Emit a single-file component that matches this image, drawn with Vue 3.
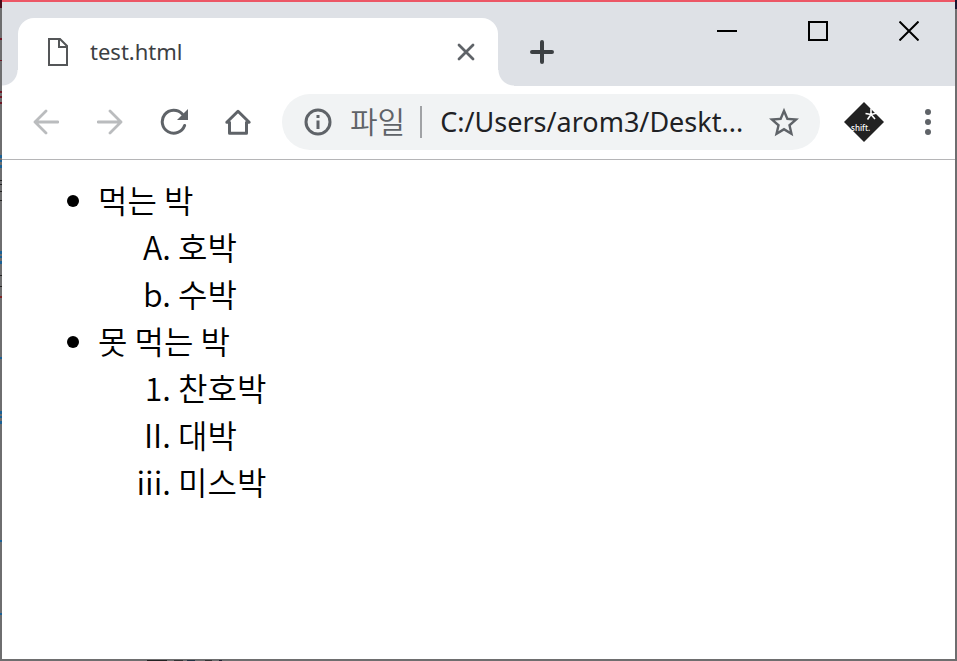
<script setup>
import { ref } from 'vue'

const address = ref('C:/Users/arom3/Deskt...')
const groups = [
  {
    name: '먹는 박',
    items: [
      { text: '호박', marker: 'upper-alpha' },
      { text: '수박', marker: 'lower-alpha' }
    ]
  },
  {
    name: '못 먹는 박',
    items: [
      { text: '찬호박', marker: 'decimal' },
      { text: '대박', marker: 'upper-roman' },
      { text: '미스박', marker: 'lower-roman' }
    ]
  }
]
</script>

<template>
  <div class="window">
    <header class="strip">
      <div class="tab">
        <svg class="file-icon" width="20" height="28" viewBox="0 0 20 28" fill="none" stroke="#545658" stroke-width="2" aria-hidden="true">
          <path d="M1 1H12L19 8V27H1Z" />
          <path d="M11 1V9H19" />
        </svg>
        <span class="title">test.html</span>
        <button class="tab-close" type="button" aria-label="Close tab">
          <svg width="18" height="18" viewBox="0 0 18 18" stroke="#5f6368" stroke-width="2.8" stroke-linecap="round">
            <path d="M2 2L16 16M16 2L2 16" />
          </svg>
        </button>
      </div>
      <button class="new-tab" type="button" aria-label="New tab">
        <svg width="24" height="24" viewBox="0 0 24 24" stroke="#3c4043" stroke-width="4" stroke-linecap="round">
          <path d="M12 2V22M2 12H22" />
        </svg>
      </button>
      <div class="controls">
        <button type="button" aria-label="Minimize">
          <svg width="20" height="20" viewBox="0 0 20 20"><path d="M0 9H20V11H0Z" /></svg>
        </button>
        <button type="button" aria-label="Maximize">
          <svg width="20" height="20" viewBox="0 0 20 20" fill="none" stroke="#000" stroke-width="2"><path d="M1 1H19V19H1Z" /></svg>
        </button>
        <button type="button" aria-label="Close window">
          <svg width="20" height="20" viewBox="0 0 20 20" stroke="#000" stroke-width="2"><path d="M0.5 0.5L19.5 19.5M19.5 0.5L0.5 19.5" /></svg>
        </button>
      </div>
    </header>

    <nav class="toolbar">
      <button class="nav-button" type="button" aria-label="Back">
        <svg width="26" height="26" viewBox="0 0 26 26" fill="none" stroke="#babcbe" stroke-width="2.8" stroke-linecap="round" stroke-linejoin="round">
          <path d="M13 2L2 13L13 24M2 13H25" />
        </svg>
      </button>
      <button class="nav-button" type="button" aria-label="Forward">
        <svg width="26" height="26" viewBox="0 0 26 26" fill="none" stroke="#babcbe" stroke-width="2.8" stroke-linecap="round" stroke-linejoin="round">
          <path d="M13 2L24 13L13 24M24 13H1" />
        </svg>
      </button>
      <button class="nav-button" type="button" aria-label="Reload">
        <svg width="28" height="28" viewBox="0 0 28 28" fill="none">
          <path d="M24.6 17.5A11.5 11.5 0 1 1 22.3 6" stroke="#5f6368" stroke-width="3" stroke-linecap="round" />
          <path d="M28 1V12H17Z" fill="#5f6368" />
        </svg>
      </button>
      <button class="nav-button" type="button" aria-label="Home">
        <svg width="28" height="28" viewBox="0 0 28 28" fill="none" stroke="#5f6368" stroke-width="3" stroke-linecap="round" stroke-linejoin="round">
          <path d="M5.500 14.300H2.800L14 3.300L25.200 14.300H22.500V25.200H5.500Z" />
        </svg>
      </button>

      <div class="omnibox">
        <svg class="info-icon" width="28" height="28" viewBox="0 0 28 28" aria-hidden="true">
          <circle cx="14" cy="14" r="12" fill="none" stroke="#5f6368" stroke-width="3" />
          <path d="M12.5 7H15.5V10H12.5ZM12.5 12.5H15.5V21H12.5Z" fill="#5f6368" />
        </svg>
        <label class="scheme" for="address">파일</label>
        <input id="address" v-model="address" class="address" type="text" spellcheck="false" />
        <button class="star" type="button" aria-label="Bookmark this page">
          <svg width="30" height="30" viewBox="2 1.500 20 20" fill="#5f6368">
            <path d="M22 9.240l-7.190-.620L12 2 9.190 8.630 2 9.240l5.460 4.730L5.820 21 12 17.270 18.180 21l-1.630-7.030L22 9.240zM12 15.400l-3.760 2.270 1-4.280-3.320-2.880 4.380-.380L12 6.100l1.710 4.040 4.380.380-3.320 2.880 1 4.280L12 15.400z" />
          </svg>
        </button>
      </div>

      <button class="tool" type="button" aria-label="Shift extension">
        <svg width="40" height="40" viewBox="0 0 40 40">
          <path d="M20 0L40 20L20 40L0 20Z" fill="#222" />
          <path d="M27 6.500V12.500M27 12.500L21.500 11.500M27 12.500L33 11M27 12.500L23.500 17.500M27 12.500L31 17" stroke="#fff" stroke-width="1.600" />
          <text x="7" y="29" fill="#fff" class="logo-text">shift.</text>
        </svg>
      </button>
      <button class="tool" type="button" aria-label="Menu">
        <svg width="6" height="26" viewBox="0 0 6 26" fill="#5f6368">
          <circle cx="3" cy="3" r="3" /><circle cx="3" cy="13" r="3" /><circle cx="3" cy="23" r="3" />
        </svg>
      </button>
    </nav>

    <main class="page">
      <ul>
        <li v-for="group in groups" :key="group.name">
          {{ group.name }}
          <ol>
            <li v-for="item in group.items" :key="item.text" :class="item.marker">{{ item.text }}</li>
          </ol>
        </li>
      </ul>
    </main>
  </div>
</template>

<style>
body {
  margin: 0;
}
</style>

<style scoped>
.window {
  box-sizing: border-box;
  min-height: 100vh;
  padding: 0 2px 2px;
  display: flex;
  flex-direction: column;
  font-family: "Noto Sans", "Noto Sans CJK KR", sans-serif;
  background-color: #6e6e6f;
  background-image:
    linear-gradient(90deg, transparent 147px, #222 147px, #222 167px, transparent 167px, transparent 174px, #333 174px, #333 183px, transparent 183px, transparent 187px, #234 187px, #234 195px, transparent 195px, transparent 205px, #333 205px, #333 212px, transparent 212px, transparent 219px, #223 219px, #223 222px, transparent 222px),
    linear-gradient(#4a0d1b 8px, transparent 8px, transparent 38px, #701825 38px, #701825 40px, transparent 40px, transparent 60px, #701825 60px, #701825 61px, transparent 61px, transparent 91px, #701825 91px, #701825 93px, transparent 93px, transparent 96px, #701825 96px, #701825 98px, transparent 98px, transparent 102px, #701825 102px, #701825 104px, transparent 104px, transparent 155px, #1b6195 155px, #1b6195 158px, transparent 158px, transparent 160px, #1b6195 160px, #1b6195 162px, transparent 162px, transparent 165px, #1b6195 165px, #1b6195 168px, transparent 168px, transparent 180px, #222 180px, #222 181px, transparent 181px, transparent 184px, #222 184px, #222 185px, transparent 185px, transparent 191px, #222 191px, #222 192px, transparent 192px, transparent 200px, #222 200px, #222 201px, transparent 201px, transparent 251px, #1b6195 251px, #1b6195 254px, transparent 254px, transparent 256px, #1b6195 256px, #1b6195 258px, transparent 258px, transparent 261px, #1b6195 261px, #1b6195 264px, transparent 264px, transparent 275px, #222 275px, #222 276px, transparent 276px, transparent 286px, #222 286px, #222 287px, transparent 287px, transparent 296px, #802525 296px, #802525 298px, transparent 298px, transparent 357px, #1b6195 357px, #1b6195 359px, transparent 359px, transparent 411px, #1b6195 411px, #1b6195 414px, transparent 414px, transparent 416px, #1b6195 416px, #1b6195 418px, transparent 418px, transparent 421px, #1b6195 421px, #1b6195 424px, transparent 424px, transparent 540px, #1b6195 540px, #1b6195 542px, transparent 542px, transparent 613px, #1b6195 613px, #1b6195 615px, transparent 615px),
    linear-gradient(#171430 9px, transparent 9px);
  background-size: 100% 1px, 2px 100%, 2px 100%;
  background-position: left bottom, left top, right top;
  background-repeat: no-repeat;
}

button {
  display: flex;
  align-items: center;
  justify-content: center;
  padding: 0;
  border: 0;
  background: transparent;
}

.strip {
  display: flex;
  height: 84px;
  border-top: 2px solid #ec5766;
  background: #dee1e6;
}

.tab {
  position: relative;
  box-sizing: border-box;
  flex: 0 1 480px;
  display: flex;
  align-items: center;
  margin: 16px 0 0 16px;
  padding: 0 16px 0 30px;
  border-radius: 16px 16px 0 0;
  background: #fff;
}

.tab::before,
.tab::after {
  content: "";
  position: absolute;
  bottom: 0;
  width: 16px;
  height: 16px;
}

.tab::before {
  right: 100%;
  background: radial-gradient(circle at 0 0, transparent 15px, #fff 16px);
}

.tab::after {
  left: 100%;
  background: radial-gradient(circle at 100% 0, transparent 15px, #fff 16px);
}

.title {
  flex: 1;
  margin-left: 22px;
  padding-bottom: 2px;
  font-size: 22px;
  line-height: 32px;
  color: #3c4043;
}

.tab-close {
  width: 32px;
  height: 32px;
}

.new-tab {
  width: 56px;
  height: 56px;
  margin: 22px 0 0 16px;
}

.controls {
  display: flex;
  height: 58px;
  margin: 0 1px 0 auto;
}

.controls button {
  width: 91px;
}

.toolbar {
  display: flex;
  align-items: center;
  padding: 8px 7px 9px 12px;
  border-bottom: 1px solid #b5b5b7;
  background: #fff;
}

.nav-button {
  width: 64px;
  height: 56px;
}

.omnibox {
  box-sizing: border-box;
  flex: 1;
  min-width: 0;
  display: flex;
  align-items: center;
  height: 56px;
  margin-left: 12px;
  padding: 0 20px 0 22px;
  border-radius: 28px;
  background: #f1f3f4;
}

.info-icon {
  flex: none;
}

.scheme {
  margin-left: 18px;
  padding: 0 15px 4px 0;
  border-right: 2px solid #a0a2a5;
  font-family: "Noto Sans CJK KR", sans-serif;
  font-size: 30px;
  font-weight: 350;
  line-height: 28px;
  color: #5f6368;
}

.address {
  box-sizing: border-box;
  flex: 1;
  min-width: 0;
  height: 40px;
  margin-left: 18px;
  padding: 0 0 2px;
  border: 0;
  outline: 0;
  background: transparent;
  font-family: "Noto Sans", sans-serif;
  font-size: 27px;
  color: #202124;
}

.star {
  width: 32px;
  height: 32px;
}

.tool {
  width: 40px;
  height: 40px;
  margin-left: 24px;
}

.logo-text {
  font-family: "Noto Sans", sans-serif;
  font-size: 8px;
  font-weight: 500;
}

.page {
  flex: 1;
  padding: 16px;
  background: #fff;
  font-family: "Noto Sans CJK KR", sans-serif;
  font-size: 32px;
  font-weight: 350;
  line-height: 47px;
  color: #000;
}

ul,
ol {
  margin: 0;
  padding-left: 80px;
}

.upper-alpha {
  list-style-type: upper-alpha;
}

.lower-alpha {
  list-style-type: lower-alpha;
}

.decimal {
  list-style-type: decimal;
}

.upper-roman {
  list-style-type: upper-roman;
}

.lower-roman {
  list-style-type: lower-roman;
}
</style>
